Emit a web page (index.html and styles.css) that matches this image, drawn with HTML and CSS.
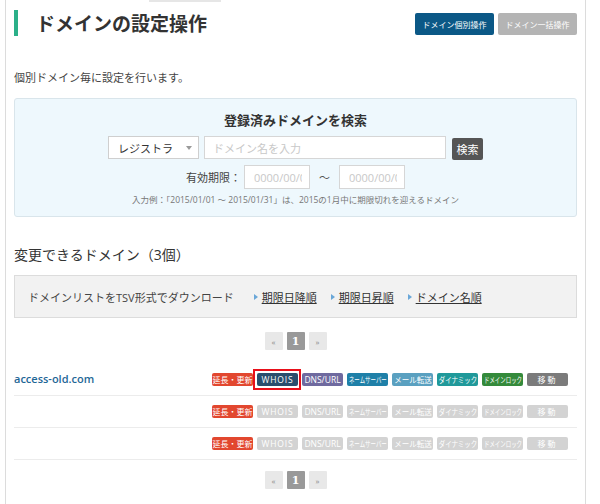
FILE: index.html
```html
<!DOCTYPE html>
<html lang="ja">
<head>
<meta charset="utf-8">
<title>ドメインの設定操作</title>
<link rel="stylesheet" href="styles.css">
</head>
<body>
<div class="page">
  <div class="topstrip"><span class="tabedge"></span></div>
  <header class="head">
    <h1 class="title">ドメインの設定操作</h1>
    <div class="modes">
      <a class="mode mode-on">ドメイン個別操作</a>
      <a class="mode mode-off">ドメイン一括操作</a>
    </div>
  </header>
  <p class="lead">個別ドメイン毎に設定を行います。</p>

  <section class="search">
    <h2 class="search-title">登録済みドメインを検索</h2>
    <div class="search-row">
      <div class="select"><span>レジストラ</span><span class="caret"></span></div>
      <input class="text" type="text" placeholder="ドメイン名を入力">
      <button class="go">検索</button>
    </div>
    <div class="date-row">
      <span class="label">有効期限：</span>
      <input class="date" type="text" placeholder="0000/00/00">
      <span class="tilde">〜</span>
      <input class="date" type="text" placeholder="0000/00/00">
    </div>
    <p class="hint">入力例：「2015/01/01 〜 2015/01/31」は、2015の1月中に期限切れを迎えるドメイン</p>
  </section>

  <h2 class="list-title">変更できるドメイン（3個）</h2>
  <div class="download">
    <span class="dl-label">ドメインリストをTSV形式でダウンロード</span>
    <a class="dl">期限日降順</a>
    <a class="dl">期限日昇順</a>
    <a class="dl">ドメイン名順</a>
  </div>

  <nav class="pager">
    <span class="pg">«</span><span class="pg pg-cur">1</span><span class="pg">»</span>
  </nav>

  <ul class="domains">
    <li class="row">
      <span class="name">access-old.com</span>
      <div class="badges">
        <span class="badge b-renew"><span class="lbl">延長・更新</span></span>
        <span class="badge b-whois selected"><span class="lbl lat">WHOIS</span></span>
        <span class="badge b-dns"><span class="lbl lat2">DNS/URL</span></span>
        <span class="badge b-ns"><span class="lbl sq7">ネームサーバー</span></span>
        <span class="badge b-mail"><span class="lbl sq5">メール転送</span></span>
        <span class="badge b-dyn"><span class="lbl sq6">ダイナミック</span></span>
        <span class="badge b-lock"><span class="lbl sq7">ドメインロック</span></span>
        <span class="badge b-move"><span class="lbl wide">移動</span></span>
      </div>
    </li>
    <li class="row">
      <span class="name"></span>
      <div class="badges">
        <span class="badge b-renew"><span class="lbl">延長・更新</span></span>
        <span class="badge off"><span class="lbl lat">WHOIS</span></span>
        <span class="badge off"><span class="lbl lat2">DNS/URL</span></span>
        <span class="badge off"><span class="lbl sq7">ネームサーバー</span></span>
        <span class="badge off"><span class="lbl sq5">メール転送</span></span>
        <span class="badge off"><span class="lbl sq6">ダイナミック</span></span>
        <span class="badge off"><span class="lbl sq7">ドメインロック</span></span>
        <span class="badge off"><span class="lbl wide">移動</span></span>
      </div>
    </li>
    <li class="row">
      <span class="name"></span>
      <div class="badges">
        <span class="badge b-renew"><span class="lbl">延長・更新</span></span>
        <span class="badge off"><span class="lbl lat">WHOIS</span></span>
        <span class="badge off"><span class="lbl lat2">DNS/URL</span></span>
        <span class="badge off"><span class="lbl sq7">ネームサーバー</span></span>
        <span class="badge off"><span class="lbl sq5">メール転送</span></span>
        <span class="badge off"><span class="lbl sq6">ダイナミック</span></span>
        <span class="badge off"><span class="lbl sq7">ドメインロック</span></span>
        <span class="badge off"><span class="lbl wide">移動</span></span>
      </div>
    </li>
  </ul>

  <nav class="pager pager-bottom">
    <span class="pg">«</span><span class="pg pg-cur">1</span><span class="pg">»</span>
  </nav>
</div>
</body>
</html>
```

FILE: styles.css
```css
* { box-sizing: border-box; }

html, body {
  margin: 0;
  padding: 0;
  background: #fff;
}

body {
  font-family: "Open Sans", "Noto Sans CJK JP", sans-serif;
  color: #333;
  font-size: 11px;
}

.page {
  margin-left: 5px;
  width: 581px;
  min-height: 504px;
  border-left: 1px solid #dcdcdc;
  border-right: 1px solid #dcdcdc;
  padding: 0 8px;
}

.topstrip {
  height: 2px;
  display: flex;
}

.tabedge {
  margin-left: 135px;
  width: 72px;
  height: 2px;
  background: #e6e6e6;
}

/* header */
.head {
  margin-top: 8px;
  display: flex;
  justify-content: space-between;
  align-items: center;
}

.title {
  margin: 0;
  border-left: 4px solid #2bb089;
  padding-left: 18px;
  font-size: 19px;
  line-height: 26px;
  font-weight: bold;
  color: #333;
  font-family: "Noto Sans CJK JP", sans-serif;
}

.modes {
  display: flex;
  gap: 4px;
  margin-top: 2px;
}

.mode {
  width: 79px;
  height: 22px;
  display: flex;
  align-items: center;
  justify-content: center;
  color: #fff;
  font-size: 8px;
  border-radius: 2px;
  font-family: "Noto Sans CJK JP", sans-serif;
}

.mode-on { background: #0b5886; }
.mode-off { background: #b4b4b4; }

.lead {
  margin: 33px 0 0;
  line-height: 16px;
  font-size: 11px;
  color: #444;
  font-family: "Noto Sans CJK JP", sans-serif;
}

/* search */
.search {
  margin-top: 13px;
  background: #eef8fd;
  border: 1px solid #d9e5eb;
  border-radius: 3px;
  padding: 12px 0 10px;
}

.search-title {
  margin: 0;
  text-align: center;
  font-size: 13px;
  line-height: 18px;
  font-weight: bold;
  color: #333;
  font-family: "Noto Sans CJK JP", sans-serif;
}

.search-row {
  margin-top: 7px;
  display: flex;
  justify-content: center;
  align-items: flex-start;
}

.select {
  width: 91px;
  height: 23px;
  background: #fff;
  border: 1px solid #cfcfcf;
  padding: 0 6px 0 9px;
  display: flex;
  align-items: center;
  justify-content: space-between;
  color: #333;
  font-size: 11px;
  font-family: "Noto Sans CJK JP", sans-serif;
}

.caret {
  width: 0;
  height: 0;
  border-left: 3px solid transparent;
  border-right: 3px solid transparent;
  border-top: 4px solid #9a9a9a;
}

.text {
  margin: 0 0 0 5px;
  width: 242px;
  height: 23px;
  border: 1px solid #d6d6d6;
  background: #fff;
  padding: 0 8px;
  font-size: 11px;
  font-family: "Noto Sans CJK JP", sans-serif;
  outline: none;
}

.text::placeholder,
.date::placeholder {
  color: #c8c8c8;
}

.go {
  margin: 2px 0 0 6px;
  width: 31px;
  height: 22px;
  border: none;
  border-radius: 2px;
  background: #555;
  color: #fff;
  font-size: 11px;
  padding: 0;
  font-family: "Noto Sans CJK JP", sans-serif;
}

.date-row {
  margin-top: 5px;
  display: flex;
  justify-content: center;
  align-items: center;
}

.label {
  font-size: 11px;
  color: #444;
  margin-right: 3px;
  font-family: "Noto Sans CJK JP", sans-serif;
}

.date {
  margin: 0;
  width: 66px;
  height: 24px;
  border: 1px solid #d6d6d6;
  background: #fff;
  padding: 0 7px 0 9px;
  font-size: 11px;
  font-family: "Open Sans", sans-serif;
  outline: none;
}

.tilde {
  width: 29px;
  text-align: center;
  color: #555;
  font-size: 11px;
  font-family: "Noto Sans CJK JP", sans-serif;
}

.hint {
  margin: 5px 0 0;
  text-align: center;
  font-size: 8.5px;
  line-height: 12px;
  color: #777;
}

/* list */
.list-title {
  margin: 28px 0 0;
  font-size: 14px;
  line-height: 20px;
  font-weight: normal;
  color: #333;
}

.download {
  margin-top: 10px;
  height: 43px;
  background: #f2f2f2;
  border: 1px solid #dcdcdc;
  padding: 0 13px;
  display: flex;
  align-items: center;
  color: #444;
  font-size: 11px;
}

.dl {
  display: inline-flex;
  align-items: center;
  margin-left: 14px;
  color: #333;
  text-decoration: underline;
  font-family: "Noto Sans CJK JP", sans-serif;
}

.dl-label + .dl { margin-left: 20px; }

.dl::before {
  content: "";
  width: 0;
  height: 0;
  border-top: 3px solid transparent;
  border-bottom: 3px solid transparent;
  border-left: 4px solid #6aa7d8;
  margin-right: 4px;
}

.pager {
  margin-top: 14px;
  display: flex;
  justify-content: center;
  gap: 4px;
}

.pager-bottom { margin-top: 11px; }

.pg {
  width: 18px;
  height: 18px;
  background: #e8e8e8;
  color: #888;
  font-size: 8px;
  display: flex;
  align-items: center;
  justify-content: center;
  border-radius: 1px;
}

.pg-cur {
  background: #999;
  color: #fff;
  font-size: 11px;
  font-weight: bold;
  font-family: "DejaVu Serif", serif;
}

.domains {
  list-style: none;
  margin: 14px 0 0;
  padding: 0;
}

.row {
  height: 32px;
  border-bottom: 1px solid #ececec;
  display: flex;
  align-items: center;
  justify-content: space-between;
  padding-right: 9px;
}

.name {
  color: #1f6797;
  font-size: 11px;
  font-weight: 600;
  padding-bottom: 2px;
}

.badges {
  display: flex;
  gap: 4px;
}

.badge {
  width: 41px;
  height: 13px;
  border-radius: 2px;
  color: #fff;
  font-size: 8px;
  line-height: 13px;
  display: flex;
  justify-content: center;
  align-items: center;
  white-space: nowrap;
  font-family: "Noto Sans CJK JP", sans-serif;
}

.lbl { display: inline-block; }
.lat { font-family: "Open Sans", sans-serif; font-size: 8.5px; letter-spacing: 0.8px; }
.lat2 { font-family: "Open Sans", sans-serif; font-size: 8.5px; }
.sq7 { transform: scaleX(0.68); }
.sq6 { transform: scaleX(0.8); }
.sq5 { transform: scaleX(0.94); }
.wide { letter-spacing: 2px; }

.b-renew { background: #e2472f; }
.b-whois { background: #2a4e6d; }
.b-dns { background: #6f6a9f; }
.b-ns { background: #1f80a8; }
.b-mail { background: #5aa0c0; }
.b-dyn { background: #20999a; }
.b-lock { background: #348a3b; }
.b-move { background: #7b7b7b; }
.off { background: #d3d3d3; }

.selected {
  position: relative;
}

.selected::after {
  content: "";
  position: absolute;
  top: -4px;
  left: -4px;
  right: -3px;
  bottom: -4px;
  border: 2px solid #e8101a;
}
```
